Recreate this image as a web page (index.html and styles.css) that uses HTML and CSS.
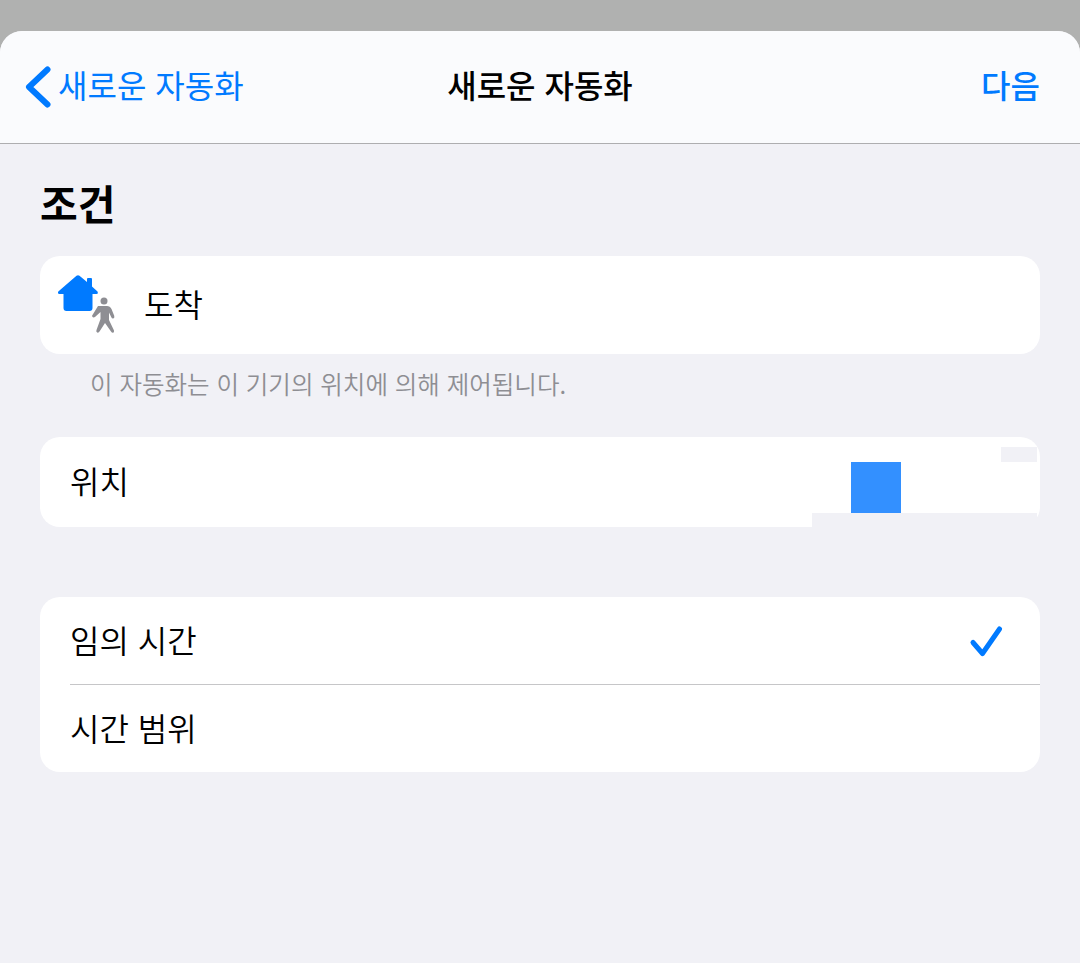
FILE: index.html
```html
<!DOCTYPE html>
<html lang="ko">
<head>
<meta charset="utf-8">
<title>새로운 자동화</title>
<link rel="stylesheet" href="styles.css">
</head>
<body>
<div class="sheet">
  <header class="navbar">
    <div class="nav-back">
      <svg class="chevron" width="26" height="42" viewBox="0 0 26 42"><path d="M22.500 3.500 L4 21 L22.500 38.500" fill="none" stroke="#007aff" stroke-width="6" stroke-linecap="round" stroke-linejoin="round"/></svg>
      <span>새로운 자동화</span>
    </div>
    <div class="nav-title">새로운 자동화</div>
    <div class="nav-next">다음</div>
  </header>
  <main class="content">
    <h1 class="section-title">조건</h1>
    <section class="card arrive">
      <svg class="arrive-icon" width="62" height="64" viewBox="0 0 62 64">
        <path d="M19.500 2.800 Q21 1.700 22.500 2.800 L30 9 V6 Q30 5 31 5 H34 Q35 5 35 6 V13.500 L40.500 18.500 Q41.500 21 39.500 21 H35.500 V35 Q35.500 38 32.500 38 H9.500 Q6.500 38 6.500 35 V21 H2.500 Q0.300 21 1.300 18.500 Z" fill="#007aff"/>
        <circle cx="47" cy="28" r="3.500" fill="#8e8e93"/>
        <path d="M41 33 H50 Q53 33 54.500 36 L57.300 43 Q57.700 45.500 56 45.500 Q54.800 45.500 54.200 44 L52 39.500 V47 L57 57.500 Q57.500 59.800 55.800 59.800 Q54.800 59.800 54 58.500 L48 50 L42.500 58.500 Q41.700 60 40.200 59.500 Q38.800 58.800 39.500 57 L43.500 46 V39 L38 44 Q36.300 45 35.200 43.500 Q34.800 42.500 35.800 41.500 Z" fill="#8e8e93"/>
      </svg>
      <span class="row-label arrive-label">도착</span>
    </section>
    <p class="footnote">이 자동화는 이 기기의 위치에 의해 제어됩니다.</p>
    <section class="card location">
      <span class="row-label">위치</span>
      <div class="patch patch-bottom"></div>
      <div class="patch patch-corner"></div>
      <div class="patch patch-blue"></div>
    </section>
    <section class="card options">
      <div class="option-row">
        <span class="row-label">임의 시간</span>
        <svg class="check" width="36" height="36" viewBox="0 0 36 36"><path d="M4 17.500 L13.500 28.500 L30.500 4" fill="none" stroke="#007aff" stroke-width="5" stroke-linecap="round" stroke-linejoin="round"/></svg>
      </div>
      <div class="option-row">
        <span class="row-label">시간 범위</span>
      </div>
    </section>
  </main>
</div>
</body>
</html>
```
FILE: styles.css
```css
* {
  box-sizing: border-box;
}
html, body {
  margin: 0;
  padding: 0;
  height: 100%;
}
body {
  background: #b0b1b0;
  padding-top: 31px;
  overflow: hidden;
  font-family: "Noto Sans CJK KR", "Noto Sans", sans-serif;
  color: #000;
}
.sheet {
  height: 932px;
  background: #f1f1f6;
  border-radius: 22px 22px 0 0;
  overflow: hidden;
}
.navbar {
  height: 113px;
  background: #fafbfd;
  border-bottom: 1px solid #aeaeb0;
  display: grid;
  grid-template-columns: 1fr auto 1fr;
  align-items: center;
  padding: 0 40px 6px;
  font-size: 32px;
}
.nav-back {
  display: flex;
  align-items: center;
  gap: 7px;
  margin-left: -15px;
}
.nav-back span {
  color: #007aff;
}
.chevron {
  flex: none;
  margin-bottom: -5px;
}
.nav-title {
  font-weight: 500;
}
.nav-next {
  justify-self: end;
  color: #007aff;
  font-weight: 500;
}
.content {
  padding: 0 40px;
}
.section-title {
  margin: 32px 0 0;
  height: 80px;
  font-size: 41px;
  line-height: 52px;
  font-weight: 700;
}
.card {
  background: #fff;
  border-radius: 20px;
  position: relative;
}
.row-label {
  font-size: 32px;
  line-height: 44px;
  font-weight: 350;
}
.arrive {
  height: 98px;
  display: flex;
  align-items: center;
  padding-left: 17px;
}
.arrive-icon {
  flex: none;
  margin-right: 25px;
}
.arrive-label {
  margin-bottom: 5px;
}
.footnote {
  margin: 0;
  height: 83px;
  padding: 12px 0 0 50px;
  font-size: 24.500px;
  line-height: 36px;
  font-weight: 350;
  color: #8e8e93;
}
.location {
  height: 90px;
  display: flex;
  align-items: center;
  padding: 0 30px 4px;
}
.patch {
  position: absolute;
}
.patch-bottom {
  left: 772px;
  right: 3px;
  top: 76px;
  bottom: 0;
  background: #f1f1f6;
}
.patch-corner {
  left: 961px;
  width: 36px;
  top: 10px;
  height: 15px;
  background: #f1f1f6;
}
.patch-blue {
  left: 811px;
  width: 50px;
  top: 25px;
  height: 51px;
  background: #3390ff;
}
.options {
  margin-top: 70px;
  height: 175px;
  padding-left: 30px;
}
.option-row {
  height: 87px;
  display: flex;
  align-items: center;
  justify-content: space-between;
  padding: 0 35px 4px 0;
}
.option-row:first-child {
  height: 88px;
  border-bottom: 1px solid #c6c6c8;
}
.check {
  flex: none;
  margin-top: 8px;
}
```
